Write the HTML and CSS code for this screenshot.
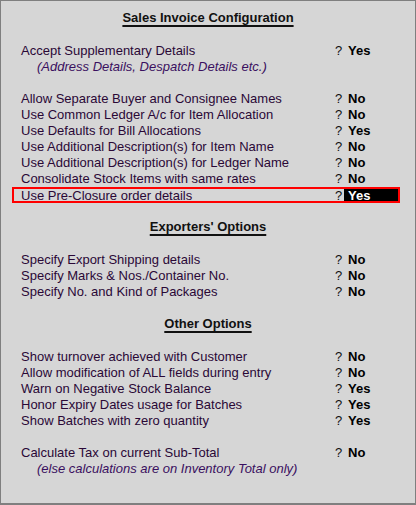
FILE: index.html
```html
<!DOCTYPE html>
<html>
<head>
<meta charset="utf-8">
<link rel="stylesheet" href="styles.css">
</head>
<body>
<div class="panel">
  <div class="heading"><span>Sales Invoice Configuration</span></div>
  <div class="gap"></div>
  <div class="row"><span class="label">Accept Supplementary Details</span><span class="q">?</span><span class="val">Yes</span></div>
  <div class="note">(Address Details, Despatch Details etc.)</div>
  <div class="gap"></div>
  <div class="row"><span class="label">Allow Separate Buyer and Consignee Names</span><span class="q">?</span><span class="val">No</span></div>
  <div class="row"><span class="label">Use Common Ledger A/c for Item Allocation</span><span class="q">?</span><span class="val">No</span></div>
  <div class="row"><span class="label">Use Defaults for Bill Allocations</span><span class="q">?</span><span class="val">Yes</span></div>
  <div class="row"><span class="label">Use Additional Description(s) for Item Name</span><span class="q">?</span><span class="val">No</span></div>
  <div class="row"><span class="label">Use Additional Description(s) for Ledger Name</span><span class="q">?</span><span class="val">No</span></div>
  <div class="row"><span class="label">Consolidate Stock Items with same rates</span><span class="q">?</span><span class="val">No</span></div>
  <div class="row active"><span class="label">Use Pre-Closure order details</span><span class="q">?</span><span class="val">Yes</span></div>
  <div class="gap"></div>
  <div class="heading"><span>Exporters' Options</span></div>
  <div class="gap"></div>
  <div class="row"><span class="label">Specify Export Shipping details</span><span class="q">?</span><span class="val">No</span></div>
  <div class="row"><span class="label">Specify Marks &amp; Nos./Container No.</span><span class="q">?</span><span class="val">No</span></div>
  <div class="row"><span class="label">Specify No. and Kind of Packages</span><span class="q">?</span><span class="val">No</span></div>
  <div class="gap"></div>
  <div class="heading"><span>Other Options</span></div>
  <div class="gap"></div>
  <div class="row"><span class="label">Show turnover achieved with Customer</span><span class="q">?</span><span class="val">No</span></div>
  <div class="row"><span class="label">Allow modification of ALL fields during entry</span><span class="q">?</span><span class="val">No</span></div>
  <div class="row"><span class="label">Warn on Negative Stock Balance</span><span class="q">?</span><span class="val">Yes</span></div>
  <div class="row"><span class="label">Honor Expiry Dates usage for Batches</span><span class="q">?</span><span class="val">Yes</span></div>
  <div class="row"><span class="label">Show Batches with zero quantity</span><span class="q">?</span><span class="val">Yes</span></div>
  <div class="gap"></div>
  <div class="row"><span class="label">Calculate Tax on current Sub-Total</span><span class="q">?</span><span class="val">No</span></div>
  <div class="note">(else calculations are on Inventory Total only)</div>
</div>
</body>
</html>
```
FILE: styles.css
```css
html, body {
  margin: 0;
  padding: 0;
  background: #d6d6d6;
}
.panel {
  box-sizing: border-box;
  width: 416px;
  height: 505px;
  border: 1px solid #7f7f7f;
  border-bottom-width: 2px;
  background: #d6d6d6;
  padding-top: 9px;
  font-family: "Liberation Sans", Arial, sans-serif;
  font-size: 13px;
  color: #2a0836;
}
.heading {
  height: 17px;
  line-height: 16px;
  text-align: center;
  font-weight: bold;
  font-size: 13px;
  color: #111;
}
.heading span {
  text-decoration: underline;
  text-decoration-thickness: 2px;
  text-underline-offset: 3px;
}
.gap {
  height: 16px;
}
.row {
  display: flex;
  height: 16px;
  line-height: 16px;
  padding-left: 20px;
}
.row .label {
  width: 314px;
  white-space: nowrap;
}
.row .q {
  width: 10px;
  color: #111;
}
.row .val {
  font-weight: bold;
  color: #000;
  padding-left: 3px;
}
.row.active {
  box-sizing: border-box;
  border: 2px solid #ff0000;
  line-height: 12px;
  margin: 0 15px 0 11px;
  padding-left: 7px;
}
.row.active .label,
.row.active .q {
  line-height: 13px;
}
.row.active .val {
  flex: 1;
  background: #000;
  color: #fff;
  margin-left: -1px;
  padding-left: 4px;
  line-height: 13px;
}
.note {
  height: 16px;
  line-height: 16px;
  padding-left: 36px;
  font-style: italic;
  color: #3a1060;
}
```
